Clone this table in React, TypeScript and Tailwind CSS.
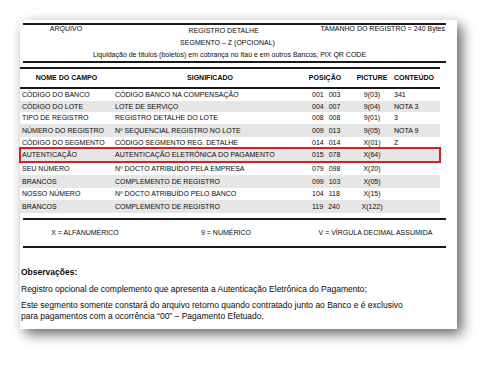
import React from "react";

type Row = {
  campo: string;
  sig: string;
  p1: string;
  p2: string;
  pic: string;
  cont: string;
  cls: string;
};

const rows: Row[] = [
  { campo: "CÓDIGO DO BANCO", sig: "CÓDIGO BANCO NA COMPENSAÇÃO", p1: "001", p2: "003", pic: "9(03)", cont: "341", cls: "h-[12px] bg-white" },
  { campo: "CÓDIGO DO LOTE", sig: "LOTE DE SERVIÇO", p1: "004", p2: "007", pic: "9(04)", cont: "NOTA 3", cls: "h-[11px] bg-[#e6e6e6]" },
  { campo: "TIPO DE REGISTRO", sig: "REGISTRO DETALHE DO LOTE", p1: "008", p2: "008", pic: "9(01)", cont: "3", cls: "h-[12px] bg-white" },
  { campo: "NÚMERO DO REGISTRO", sig: "Nº SEQUENCIAL REGISTRO NO LOTE", p1: "009", p2: "013", pic: "9(05)", cont: "NOTA 9", cls: "h-[13px] bg-[#e6e6e6]" },
  { campo: "CÓDIGO DO SEGMENTO", sig: "CÓDIGO SEGMENTO REG. DETALHE", p1: "014", p2: "014", pic: "X(01)", cont: "Z", cls: "h-[11px] bg-white" },
  { campo: "AUTENTICAÇÃO", sig: "AUTENTICAÇÃO ELETRÔNICA DO PAGAMENTO", p1: "015", p2: "078", pic: "X(64)", cont: "", cls: "h-[14px] bg-[#e6e6e6] outline-2 outline-[#e11b24] outline-offset-[-1px]" },
  { campo: "SEU NÚMERO", sig: "Nº DOCTO ATRIBUÍDO PELA EMPRESA", p1: "079", p2: "098", pic: "X(20)", cont: "", cls: "h-[13px] bg-white" },
  { campo: "BRANCOS", sig: "COMPLEMENTO DE REGISTRO", p1: "099", p2: "103", pic: "X(05)", cont: "", cls: "h-[13px] bg-[#e6e6e6]" },
  { campo: "NOSSO NÚMERO", sig: "Nº DOCTO ATRIBUÍDO PELO BANCO", p1: "104", p2: "118", pic: "X(15)", cont: "", cls: "h-[12px] bg-white" },
  { campo: "BRANCOS", sig: "COMPLEMENTO DE REGISTRO", p1: "119", p2: "240", pic: "X(122)", cont: "", cls: "h-[13px] bg-[#e6e6e6]" },
];

export default function App() {
  return (
    <div
      className="w-[499px] h-[370px] bg-white overflow-hidden pt-[20px] pl-[20px] text-[#0a0a0a]"
      style={{ fontFamily: '"Liberation Sans", Arial, sans-serif' }}
    >
      <div className="w-[437px] h-[309px] bg-white shadow-[5px_5px_12px_rgba(0,0,0,0.6)] pt-[3px]">
        {/* Top header block */}
        <div className="ml-[3px] w-[423px]">
          <div className="h-[2px] bg-[#1a1a1a]" />
          <div className="grid grid-cols-[86px_1fr_auto] text-[7px] leading-[8px]">
            <div className="text-center">ARQUIVO</div>
            <div className="text-center pl-[18px] mt-[2px]">REGISTRO DETALHE</div>
            <div className="text-right pr-[1px]">TAMANHO DO REGISTRO = 240 Bytes</div>
          </div>
          <div className="text-center pr-[14px] text-[7px] leading-[8px] mt-[4px]">SEGMENTO – Z (OPCIONAL)</div>
          <div className="text-center pr-[10px] text-[7px] leading-[8px] mt-[4px]">
            Liquidação de títulos (boletos) em cobrança no Itaú e em outros Bancos, PIX QR CODE
          </div>
          <div className="h-[2px] bg-[#1a1a1a] mt-[2px]" />
        </div>

        {/* Table */}
        <div className="w-[420px] mt-[4px]">
          <div className="h-[2px] bg-[#1a1a1a]" />
          <div className="grid grid-cols-[93px_187px_50px_44px_46px] h-[18px] items-center text-[7px] font-bold leading-[8px]">
            <div className="text-center">NOME DO CAMPO</div>
            <div className="text-center pl-[7px]">SIGNIFICADO</div>
            <div className="text-center">POSIÇÃO</div>
            <div className="text-center">PICTURE</div>
            <div className="text-left">CONTEÚDO</div>
          </div>
          <div className="h-[2px] bg-[#1a1a1a]" />
          {rows.map((r, i) => (
            <div
              key={i}
              className={`grid grid-cols-[93px_187px_50px_44px_46px] items-center text-[7px] leading-[8px] ${r.cls}`}
            >
              <div className="pl-[2px] whitespace-nowrap">{r.campo}</div>
              <div className="pl-[2px] whitespace-nowrap">{r.sig}</div>
              <div className="pl-[12px] flex gap-[5px]">
                <span>{r.p1}</span>
                <span>{r.p2}</span>
              </div>
              <div className="text-center">{r.pic}</div>
              <div className="text-left">{r.cont}</div>
            </div>
          ))}
        </div>

        {/* Legend */}
        <div className="ml-[3px] w-[423px] mt-[5px]">
          <div className="h-[2px] bg-[#1a1a1a]" />
          <div className="grid grid-cols-[124px_158px_141px] h-[26px] items-center text-[7px] leading-[8px]">
            <div className="text-center">X = ALFANUMÉRICO</div>
            <div className="text-center">9 = NUMÉRICO</div>
            <div className="text-center">V = VÍRGULA DECIMAL ASSUMIDA</div>
          </div>
          <div className="h-[2px] bg-[#1a1a1a]" />
        </div>

        {/* Observations */}
        <div className="pl-[1px] text-[8.5px] leading-[11px]">
          <div className="font-bold mt-[19px]">Observações:</div>
          <div className="mt-[6px]">
            Registro opcional de complemento que apresenta a Autenticação Eletrônica do Pagamento;
          </div>
          <div className="mt-[5px]">
            <div>Este segmento somente constará do arquivo retorno quando contratado junto ao Banco e é exclusivo</div>
            <div>para pagamentos com a ocorrência “00” – Pagamento Efetuado.</div>
          </div>
        </div>
      </div>
    </div>
  );
}
